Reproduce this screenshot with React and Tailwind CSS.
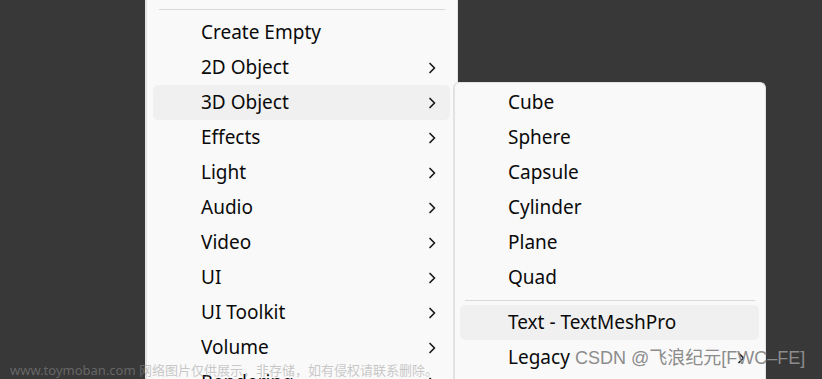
import React from "react";

const Chevron = () => (
  <svg width="10" height="12" viewBox="0 0 10 12" className="shrink-0">
    <path d="M3 1.5 L7.5 6 L3 10.5" fill="none" stroke="#1a1a1a" strokeWidth="1.7" strokeLinecap="round" strokeLinejoin="round" />
  </svg>
);

const Row = ({ label, arrow, active, textPad, mx }) => (
  <div className={`flex h-[35px] items-center rounded-[5px] ${mx} ${active ? "bg-[#f0f0f0]" : ""}`}>
    <span className="flex-1" style={{ paddingLeft: textPad }}>{label}</span>
    {arrow && <span className="mr-[13px] flex"><Chevron /></span>}
  </div>
);

export default function App() {
  const main = [
    ["Create Empty", false],
    ["2D Object", true],
    ["3D Object", true, true],
    ["Effects", true],
    ["Light", true],
    ["Audio", true],
    ["Video", true],
    ["UI", true],
    ["UI Toolkit", true],
    ["Volume", true],
    ["Rendering", true],
  ];
  const sub = ["Cube", "Sphere", "Capsule", "Cylinder", "Plane", "Quad"];
  return (
    <div
      className="relative h-[379px] w-[822px] overflow-hidden bg-[#383838] text-[19px] text-[#0a0a0a]"
      style={{ fontFamily: '"Noto Sans", "Open Sans", sans-serif' }}
    >
      <div className="ml-[145px] w-[313px] h-[420px] border-l-2 border-r border-[#e4e4e4] bg-[#f9f9f9] pt-[9px]">
        <div className="mx-[12px] h-px bg-[#d9d9d9]" />
        <div className="pt-[5px]">
          {main.map(([l, a, act]) => (
            <Row key={l} label={l} arrow={a} active={act} textPad={48} mx="ml-[6px] mr-[7px]" />
          ))}
        </div>
      </div>

      <div className="absolute left-[453px] top-[82px] w-[313px] h-[320px] rounded-t-[6px] border-l-2 border-t border-r border-[#e2e2e2] bg-[#f9f9f9] pt-[2px]">
        {sub.map((l) => (
          <Row key={l} label={l} textPad={48} mx="ml-[5px] mr-[6px]" />
        ))}
        <div className="flex h-[10px] items-center">
          <div className="mx-[10px] h-px flex-1 bg-[#d9d9d9]" />
        </div>
        <Row label="Text - TextMeshPro" active textPad={48} mx="ml-[5px] mr-[6px]" />
        <Row label="Legacy" arrow textPad={48} mx="ml-[5px] mr-[6px]" />
      </div>

      <div
        className="absolute left-[575px] top-[346px] text-[18px] leading-[24px] text-[#8c8c8c]"
        style={{ fontFamily: '"Liberation Sans", "Noto Sans CJK SC", sans-serif' }}
      >
        CSDN @飞浪纪元[FWC–FE]
      </div>
      <div
        className="absolute left-[10px] top-[361px] text-[13px] leading-[18px] text-[rgba(150,150,150,0.5)]"
        style={{ fontFamily: '"Noto Sans", "Noto Sans CJK SC", sans-serif' }}
      >
        www.toymoban.com 网络图片仅供展示，非存储，如有侵权请联系删除。
      </div>
    </div>
  );
}
